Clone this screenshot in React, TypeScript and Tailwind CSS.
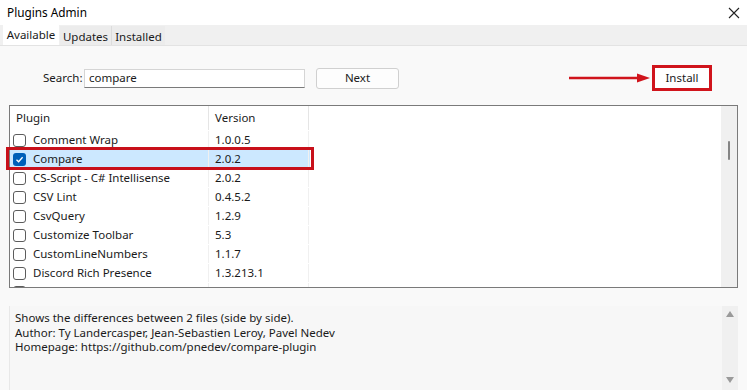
import React from "react";

const plugins = [
  { name: "Comment Wrap", ver: "1.0.0.5" },
  { name: "Compare", ver: "2.0.2", checked: true },
  { name: "CS-Script - C# Intellisense", ver: "2.0.2" },
  { name: "CSV Lint", ver: "0.4.5.2" },
  { name: "CsvQuery", ver: "1.2.9" },
  { name: "Customize Toolbar", ver: "5.3" },
  { name: "CustomLineNumbers", ver: "1.1.7" },
  { name: "Discord Rich Presence", ver: "1.3.213.1" },
  { name: "", ver: "" },
];

function Check({ checked }: { checked?: boolean }) {
  if (checked)
    return (
      <div className="w-[13px] h-[13px] rounded-[3px] bg-[#005fb8] flex items-center justify-center shrink-0">
        <svg width="9" height="9" viewBox="0 0 9 9">
          <path d="M1.5 4.7 L3.6 6.7 L7.6 2.2" stroke="white" strokeWidth="1.3" fill="none" />
        </svg>
      </div>
    );
  return <div className="w-[13px] h-[13px] rounded-[3px] border border-[#5c5c5c] bg-white shrink-0" />;
}

export default function App() {
  return (
    <div
      className="w-[747px] h-[390px] bg-[#f9f9f9] text-[11.5px] text-[#1a1a1a] overflow-hidden relative"
      style={{ fontFamily: '"Segoe UI", "Noto Sans", sans-serif' }}
    >
      {/* title bar */}
      <div className="h-[25px] bg-white flex items-center justify-between pl-[7px] pr-[7px]">
        <span className="text-[11.8px] text-black">Plugins Admin</span>
        <svg width="12" height="12" viewBox="0 0 12 12">
          <path d="M1 1 L11 11 M11 1 L1 11" stroke="#222" strokeWidth="1.1" />
        </svg>
      </div>
      {/* tabs */}
      <div className="h-[21px] bg-[#f0f0f0] flex items-end pl-[3px] border-b border-[#e3e3e3]">
        <div className="h-[22px] w-[56px] bg-white flex items-center justify-center pt-[2px]">Available</div>
        <div className="h-[19px] w-[52px] bg-[#ececec] ml-[1px] flex items-center justify-center pt-[2px] border-r border-[#dcdcdc]">Updates</div>
        <div className="h-[19px] w-[53px] bg-[#ececec] flex items-center justify-center pt-[2px]">Installed</div>
      </div>

      {/* search row */}
      <div className="h-[59px] pt-[5px] flex items-center relative">
        <span className="ml-[43px] w-[41px]">Search:</span>
        <div className="w-[221px] h-[19px] bg-white border border-[#d5d5d5] border-b-[#7a7a7a] flex items-center pl-[4px]">compare</div>
        <div className="ml-[11px] w-[83px] h-[21px] bg-[#fdfdfd] border border-[#d0d0d0] rounded-[3px] flex items-center justify-center">Next</div>
        <div className="ml-auto mr-[35px] relative flex items-center">
          <svg width="82" height="12" viewBox="0 0 82 12" className="mr-[1px]">
            <path d="M0 6 L70 6" stroke="#d0141c" strokeWidth="2.5" />
            <path d="M68 1.5 L81 6 L68 10.5 Z" fill="#d0141c" />
          </svg>
          <div className="w-[60px] h-[26px] border-[3px] border-[#d0141c] flex items-center justify-center bg-white">
            <span>Install</span>
          </div>
        </div>
      </div>

      {/* list */}
      <div className="mx-[9px] h-[183px] border border-[#7a7a7a] bg-white flex relative">
        <div className="flex-1 overflow-hidden">
          <div className="h-[24px] flex items-center">
            <div className="w-[199px] pl-[6px] border-r border-[#e5e5e5] h-full flex items-center">Plugin</div>
            <div className="w-[100px] pl-[6px] border-r border-[#e5e5e5] h-full flex items-center">Version</div>
          </div>
          {plugins.map((p, i) => (
            <div key={i} className="h-[19px] flex items-center">
              <div className={`w-[300px] h-full flex items-center pt-[1px] ${p.checked ? "bg-[#cce8ff]" : ""}`}>
                <div className="w-[199px] pl-[3px] flex items-center gap-[7px] h-full border-r border-[#f0f0f0]">
                  <Check checked={p.checked} />
                  <span>{p.name}</span>
                </div>
                <div className="w-[100px] pl-[6px] h-full flex items-center border-r border-[#f0f0f0]">{p.ver}</div>
              </div>
            </div>
          ))}
        </div>
        <div className="absolute left-[-4px] top-[41px] w-[308px] h-[23px] border-[3px] border-[#c8101a]" />
        <div className="w-[16px] bg-[#f0f0f0] relative">
          <div className="absolute left-[7px] top-[35px] w-[2px] h-[19px] bg-[#858585] rounded" />
        </div>
      </div>

      {/* description */}
      <div className="mx-[9px] mt-[18px] h-[90px] bg-[#f7f7f7] border-l border-[#e8e8e8] flex">
        <div className="flex-1 pl-[5px] pt-[5px] leading-[14.5px]">
          <div>Shows the differences between 2 files (side by side).</div>
          <div>Author: Ty Landercasper, Jean-Sebastien Leroy, Pavel Nedev</div>
          <div>Homepage: https://github.com/pnedev/compare-plugin</div>
        </div>
        <div className="w-[16px] bg-[#f0f0f0] flex flex-col items-center justify-between py-[5px]">
          <svg width="8" height="6" viewBox="0 0 8 6"><path d="M0 6 L4 0 L8 6 Z" fill="#9a9a9a" /></svg>
          <svg width="8" height="6" viewBox="0 0 8 6" className="mb-[8px]"><path d="M0 0 L4 6 L8 0 Z" fill="#9a9a9a" /></svg>
        </div>
      </div>
    </div>
  );
}
